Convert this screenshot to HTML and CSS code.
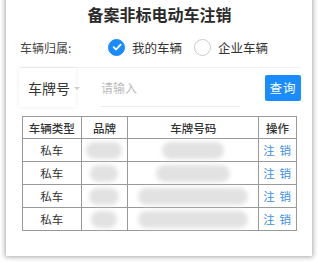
FILE: index.html
```html
<html>
<head>
<meta http-equiv="content-type" content="text/html; charset=utf-8">
<meta name="viewport" content="width=device-width, initial-scale=1">
<link rel="stylesheet" href="styles.css">
<title>备案非标电动车注销</title>
</head>
<body>
<div class=card>
<div class=title>备案非标电动车注销</div>
<div class=owner>
<div class=label>车辆归属:</div>
<div class=radios>
<div class="radio on"><span class=dot><svg width="10" height="10" viewBox="0 0 10 10"><path d="M1.6 5.2 L4.1 7.5 L8.6 2.6" fill="none" stroke="#fff" stroke-width="1.8" stroke-linecap="round" stroke-linejoin="round"/></svg></span>我的车辆</div>
<div class="radio"><span class=dot></span>企业车辆</div>
</div>
</div>
<div class=search>
<div class=select>车牌号<span class=caret></span></div>
<div class=input>请输入</div>
<div class=btn>查询</div>
</div>
<table class=list>
<tr><th class=c1>车辆类型</th><th class=c2>品牌</th><th class=c3>车牌号码</th><th class=c4>操作</th></tr>
<tr><td>私车</td><td><span class="blur b1"></span></td><td><span class="blur p1"></span></td><td><a class=op>注 销</a></td></tr>
<tr><td>私车</td><td><span class="blur b2"></span></td><td><span class="blur p2"></span></td><td><a class=op>注 销</a></td></tr>
<tr><td>私车</td><td><span class="blur b3"></span></td><td><span class="blur p3"></span></td><td><a class=op>注 销</a></td></tr>
<tr><td>私车</td><td><span class="blur b4"></span></td><td><span class="blur p4"></span></td><td><a class=op>注 销</a></td></tr>
</table>
</div>
</body>
</html>
```
FILE: styles.css
```css
html,body{margin:0;padding:0;background:#fff}
body{font-family:"Noto Sans CJK SC","Noto Sans",sans-serif;color:#333;width:318px;height:262px;overflow:hidden}
.card{margin:-6px 6px 0 6px;height:262px;box-sizing:border-box;background:#fff;box-shadow:0 0 5px 1px rgba(0,0,0,0.35);padding:6px 15px 0 14px}
.title{text-align:center;font-size:16px;font-weight:bold;line-height:18px;height:18px;padding-top:5px;padding-left:2px;color:#2a2a2a}
.owner{display:flex;align-items:center;height:24px;margin-top:12px}
.label{font-size:12px;width:88px;color:#444}
.radios{display:flex;gap:12px}
.radio{display:flex;align-items:center;font-size:12.5px;color:#333}
.dot{width:15px;height:15px;border-radius:50%;border:1px solid #ccc;margin-right:7px;display:flex;align-items:center;justify-content:center;background:#fff}
.on .dot{border-color:#1a8cff;background:#1a8cff}
.search{display:flex;align-items:center;height:39px;margin-top:8px;margin-left:-1px;border-top:1px solid #f2f2f2;margin-right:-4px}
.select{flex-shrink:0;white-space:nowrap;width:57px;height:39px;box-sizing:border-box;box-shadow:0 0 4px rgba(0,0,0,0.08);font-size:14px;color:#333;display:flex;align-items:center;padding-left:9px}
.caret{width:0;height:0;border-left:3px solid transparent;border-right:3px solid transparent;border-top:3px solid #ccc;margin-left:4px;margin-top:2px}
.input{flex-shrink:0;width:140px;height:39px;box-sizing:border-box;margin-left:24px;border-bottom:1px solid #eee;font-size:12px;color:#bbb;display:flex;align-items:center;padding-left:1px}
.btn{flex-shrink:0;margin-left:auto;width:36px;height:26px;background:#1a8cff;color:#fff;border-radius:2px;font-size:12.5px;letter-spacing:1px;display:flex;align-items:center;justify-content:center}
.list{border-collapse:collapse;margin-top:9px;margin-left:2px;width:275px;font-size:11.5px}
.list th,.list td{border:1px solid #999;text-align:center;padding:0;height:23px}
.list th{font-weight:500;color:#333;height:22px}
.c1{width:58px}.c2{width:46px}.c3{width:130px}.c4{width:37px}
.op{color:#3b8ee8;letter-spacing:1px}
.blur{display:inline-block;background:#e2e2e2;border-radius:9px;filter:blur(2px);height:17px;vertical-align:middle}
.b1{width:36px}.b2{width:28px}.b3{width:30px}.b4{width:26px}
.p1{width:62px}.p2{width:74px}.p3{width:110px}.p4{width:110px}
```
